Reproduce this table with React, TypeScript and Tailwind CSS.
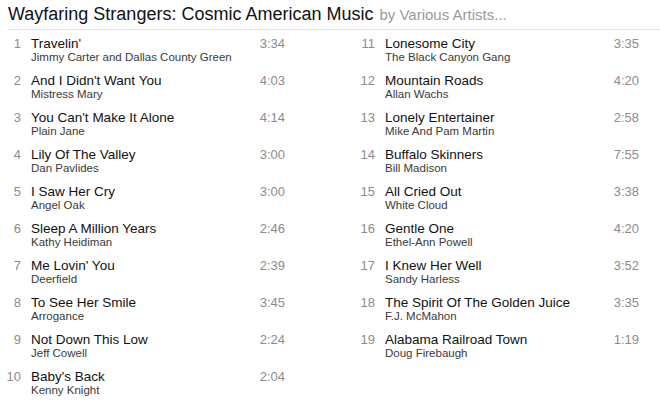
import React from "react";

type Track = { n: number; title: string; artist: string; time: string };

const tracks: Track[] = [
  { n: 1, title: "Travelin'", artist: "Jimmy Carter and Dallas County Green", time: "3:34" },
  { n: 2, title: "And I Didn't Want You", artist: "Mistress Mary", time: "4:03" },
  { n: 3, title: "You Can't Make It Alone", artist: "Plain Jane", time: "4:14" },
  { n: 4, title: "Lily Of The Valley", artist: "Dan Pavlides", time: "3:00" },
  { n: 5, title: "I Saw Her Cry", artist: "Angel Oak", time: "3:00" },
  { n: 6, title: "Sleep A Million Years", artist: "Kathy Heidiman", time: "2:46" },
  { n: 7, title: "Me Lovin' You", artist: "Deerfield", time: "2:39" },
  { n: 8, title: "To See Her Smile", artist: "Arrogance", time: "3:45" },
  { n: 9, title: "Not Down This Low", artist: "Jeff Cowell", time: "2:24" },
  { n: 10, title: "Baby's Back", artist: "Kenny Knight", time: "2:04" },
  { n: 11, title: "Lonesome City", artist: "The Black Canyon Gang", time: "3:35" },
  { n: 12, title: "Mountain Roads", artist: "Allan Wachs", time: "4:20" },
  { n: 13, title: "Lonely Entertainer", artist: "Mike And Pam Martin", time: "2:58" },
  { n: 14, title: "Buffalo Skinners", artist: "Bill Madison", time: "7:55" },
  { n: 15, title: "All Cried Out", artist: "White Cloud", time: "3:38" },
  { n: 16, title: "Gentle One", artist: "Ethel-Ann Powell", time: "4:20" },
  { n: 17, title: "I Knew Her Well", artist: "Sandy Harless", time: "3:52" },
  { n: 18, title: "The Spirit Of The Golden Juice", artist: "F.J. McMahon", time: "3:35" },
  { n: 19, title: "Alabama Railroad Town", artist: "Doug Firebaugh", time: "1:19" },
];

function Row({ t }: { t: Track }) {
  return (
    <div className="flex h-[37px] pt-[6px]">
      <div className="w-[21px] text-right text-[13px] leading-[15px] text-[#8c8c8c]">{t.n}</div>
      <div className="ml-[10px] flex-1 min-w-0">
        <div className="text-[13.5px] leading-[15px] text-[#111]">{t.title}</div>
        <div className="text-[11.5px] leading-[12px] text-[#3a3a3a]">{t.artist}</div>
      </div>
      <div className="text-right text-[13px] leading-[15px] text-[#8c8c8c]">{t.time}</div>
    </div>
  );
}

export default function App() {
  return (
    <div
      className="w-[660px] h-[405px] bg-white overflow-hidden"
      style={{ fontFamily: '"Liberation Sans", Arial, sans-serif' }}
    >
      <div className="flex items-baseline pl-[8px] h-[29px] pt-[3px]">
        <span className="text-[18px] leading-[22px] text-[#111]">Wayfaring Strangers: Cosmic American Music</span>
        <span className="ml-[6px] text-[15px] leading-[22px] text-[#9a9a9a]">by Various Artists...</span>
      </div>
      <div className="ml-[8px] border-t border-[#e4e4e4]" />
      <div className="grid grid-flow-col grid-rows-10 grid-cols-[285px_285px] gap-x-[69px]">
        {tracks.map((t) => (
          <Row key={t.n} t={t} />
        ))}
      </div>
    </div>
  );
}
